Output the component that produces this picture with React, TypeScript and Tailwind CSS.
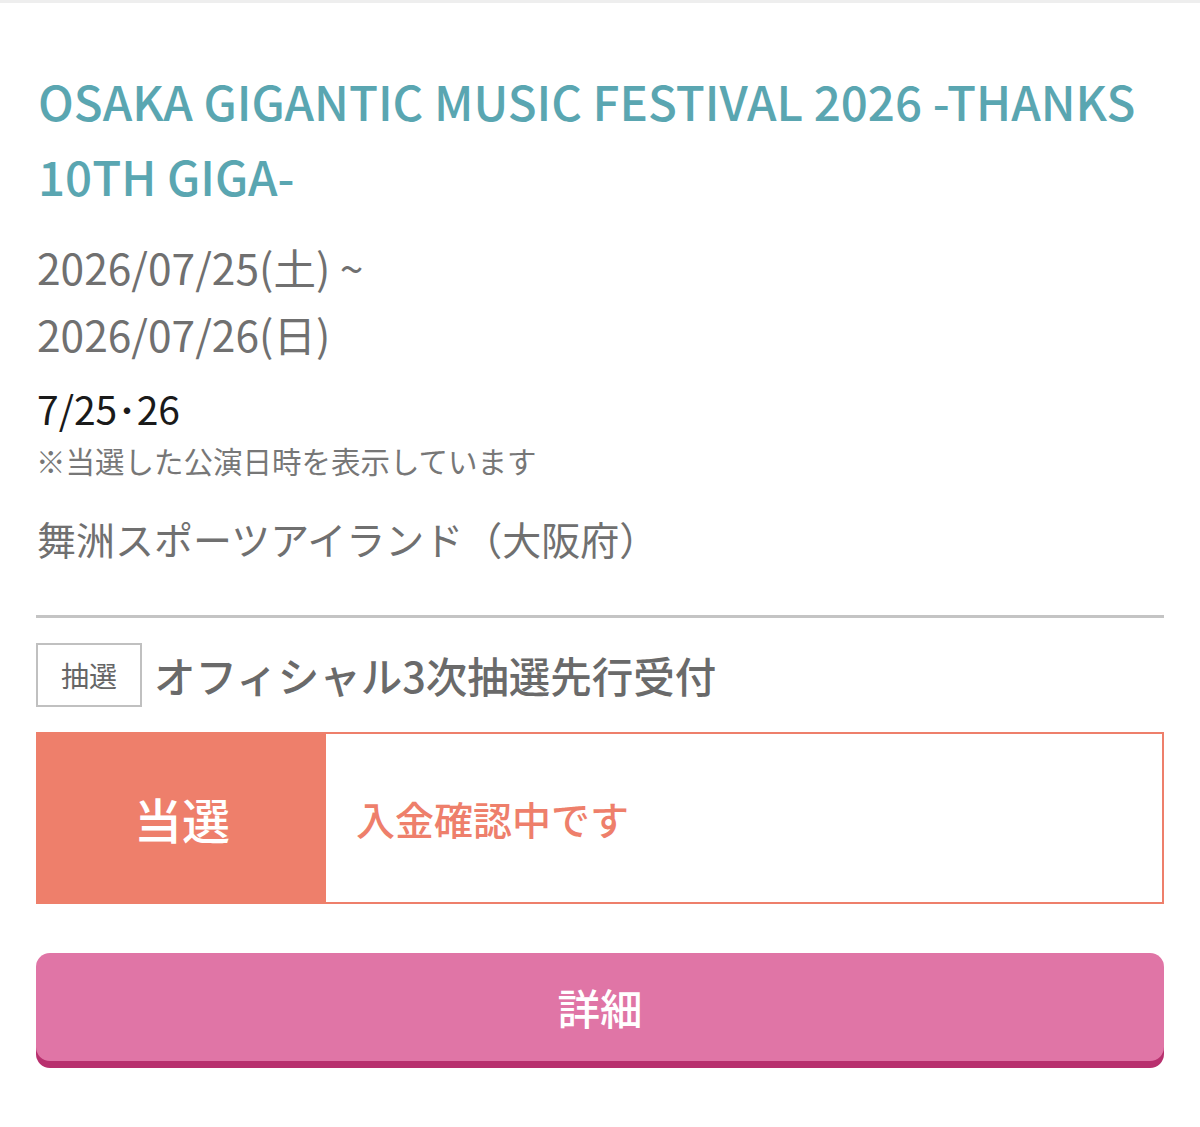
import React from "react";

export default function App() {
  return (
    <div
      className="w-[1200px] min-h-[1127px] bg-white border-t-[3px] border-[#eeeeee]"
      style={{ fontFamily: '"Noto Sans CJK JP", "Noto Sans", sans-serif' }}
    >
      <div className="px-[36px] pt-[60px]">
        <h1 className="text-[47.5px] leading-[75px] font-medium text-[#5aa6b1] pl-[2px]">
          OSAKA GIGANTIC MUSIC FESTIVAL 2026 -THANKS 10TH GIGA-
        </h1>
        <div className="mt-[20px] text-[42.5px] leading-[67px] text-[#707070] pl-[1px]">
          <div>2026/07/25(土) ~</div>
          <div>2026/07/26(日)</div>
        </div>
        <div className="mt-[17px] text-[39px] leading-[48px] text-[#1a1a1a] pl-[1px]">
          7/25･26
        </div>
        <div className="mt-[8px] text-[29.5px] leading-[40px] text-[#777777]">
          ※当選した公演日時を表示しています
        </div>
        <div className="mt-[32px] text-[39px] leading-[52px] text-[#707070] pl-[1px]">
          舞洲スポーツアイランド（大阪府）
        </div>
        <div className="mt-[51px] h-[3px] bg-[#c4c4c4]" />
        <div className="mt-[25px] flex items-center">
          <div className="w-[106px] h-[64px] border-2 border-[#c0c0c0] flex items-center justify-center text-[28px] text-[#666666]">
            抽選
          </div>
          <div className="ml-[12px] text-[41.5px] text-[#6a6a6a] font-medium">
            オフィシャル3次抽選先行受付
          </div>
        </div>
        <div className="mt-[25px] h-[172px] flex border-2 border-[#ee7f6b]">
          <div className="w-[288px] bg-[#ee7f6b] flex items-center justify-center text-[48px] text-white font-medium">
            当選
          </div>
          <div className="flex-1 flex items-center pl-[30px] text-[39px] text-[#ee7f6b] font-medium">
            入金確認中です
          </div>
        </div>
        <button className="mt-[49px] w-full h-[108px] rounded-[14px] bg-[#e075a6] shadow-[0_7px_0_#b8306e] flex items-center justify-center text-[42.5px] text-white font-medium">
          詳細
        </button>
      </div>
    </div>
  );
}
